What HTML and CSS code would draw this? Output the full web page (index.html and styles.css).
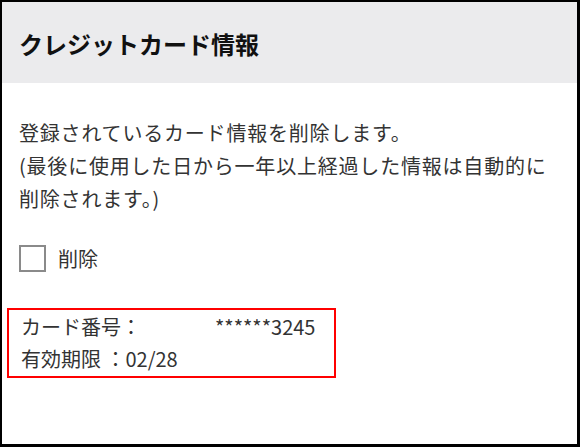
FILE: index.html
```html
<!DOCTYPE html>
<html lang="ja">
<head>
    <meta charset="UTF-8">
    <meta name="viewport" content="width=device-width, initial-scale=1.0">
    <title>クレジットカード情報</title>
    <link rel="stylesheet" href="styles.css">
</head>
<body>
    <div class="panel">
        <div class="panel-header">
            <h2>クレジットカード情報</h2>
        </div>

        <div class="panel-body">
            <p class="note">登録されているカード情報を削除します。<br>(最後に使用した日から一年以上経過した情報は自動的に<br>削除されます。)</p>

            <label class="delete-check">
                <input type="checkbox">
                <span class="check-box"></span>
                <span>削除</span>
            </label>

            <div class="card-info">
                <div class="card-row">
                    <span class="card-label">カード番号：</span>
                    <span class="card-number">******3245</span>
                </div>
                <div class="card-row">
                    <span>有効期限 ：02/28</span>
                </div>
            </div>
        </div>
    </div>
</body>
</html>
```

FILE: styles.css
```css
* {
    margin: 0;
    padding: 0;
    box-sizing: border-box;
}

body {
    font-family: "Noto Sans CJK JP", "Noto Sans", sans-serif;
    background: white;
    color: #333;
}

.panel {
    width: 580px;
    height: 447px;
    border: 2px solid #000;
    border-right-width: 3px;
    border-bottom-width: 3px;
    background: white;
}

.panel-header {
    height: 81px;
    background: #ebebed;
    padding-left: 17px;
    display: flex;
    align-items: center;
}

.panel-header h2 {
    font-size: 24px;
    font-weight: bold;
    color: #111;
    margin-top: 2px;
}

.panel-body {
    padding: 33px 17px 0 17px;
}

.note {
    font-size: 20px;
    line-height: 33px;
    letter-spacing: 0.8px;
}

.delete-check {
    display: flex;
    align-items: center;
    gap: 12px;
    margin-top: 29px;
    font-size: 20px;
    cursor: pointer;
}

.delete-check input {
    display: none;
}

.check-box {
    width: 27px;
    height: 27px;
    border: 2px solid #8a8a8a;
    background: white;
}

.card-info {
    width: 329px;
    margin: 35px 0 0 -12px;
    padding: 1px 12px 1px;
    border: 2px solid #f00;
    font-size: 20px;
    line-height: 32px;
}

.card-row {
    display: flex;
}

.card-label {
    width: 194px;
}
```
